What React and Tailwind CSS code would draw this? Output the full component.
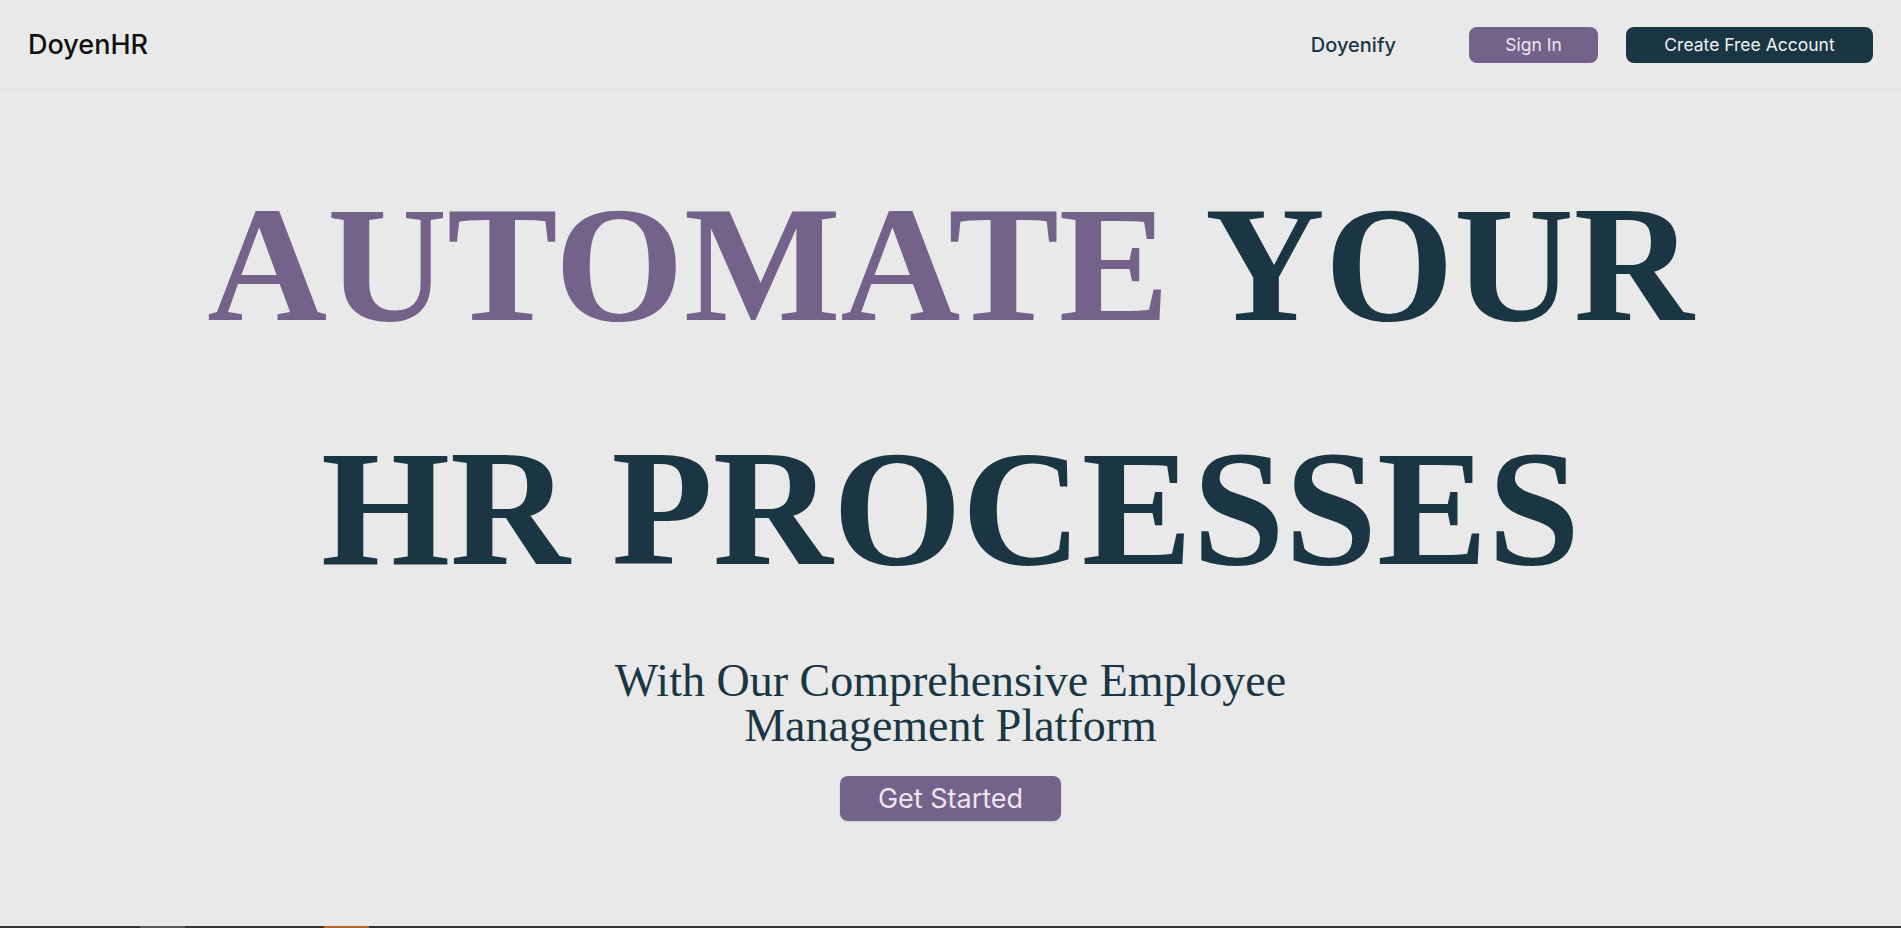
import React from "react";

const sans = "font-['Inter',sans-serif]";
const serif = "font-['Liberation_Serif',serif]";

const Header = () => (
  <header className="flex h-[90px] shrink-0 items-center justify-between border-b border-[#e1e1e1] px-7">
    <a href="#" className={`${sans} text-[27px] font-medium leading-none text-[#111111]`}>
      DoyenHR
    </a>

    <nav className="flex items-center">
      <a href="#" className={`${sans} mr-[73px] text-[20px] font-medium text-[#1a3643]`}>
        Doyenify
      </a>
      <button
        type="button"
        className={`${sans} h-9 w-[129px] rounded-lg bg-[#75628a] text-[17.5px] leading-none text-[#ece6f0]`}
      >
        Sign In
      </button>
      <button
        type="button"
        className={`${sans} ml-7 h-9 w-[247px] rounded-lg bg-[#1a3643] text-[17.5px] leading-none text-[#eef2f4]`}
      >
        Create Free Account
      </button>
    </nav>
  </header>
);

const Hero = () => (
  <main className="flex flex-1 flex-col items-center pt-[52px]">
    <h1 className={`${serif} text-center text-[166px] font-bold leading-[244px] text-[#1a3643]`}>
      <span className="text-[#75628a]">AUTOMATE</span> YOUR
      <br />
      HR PROCESSES
    </h1>

    <p className={`${serif} mt-7 max-w-[720px] text-center text-[46px] leading-[45px] text-[#1a3643]`}>
      With Our Comprehensive Employee Management Platform
    </p>

    <button
      type="button"
      className={`${sans} mt-7 w-[221px] rounded-lg bg-[#75628a] py-[7px] text-[27px] leading-[31px] text-[#ece6f0] shadow-sm`}
    >
      Get Started
    </button>
  </main>
);

export default function App() {
  return (
    <div className="flex h-screen flex-col overflow-hidden bg-[#e9e9e9]">
      <Header />
      <Hero />
      <div className="flex h-[2px] shrink-0 bg-[#333333]">
        <div className="ml-[140px] w-[45px] bg-[#5a5a5a]" />
        <div className="ml-[139px] w-[45px] bg-[#b5652a]" />
      </div>
    </div>
  );
}
